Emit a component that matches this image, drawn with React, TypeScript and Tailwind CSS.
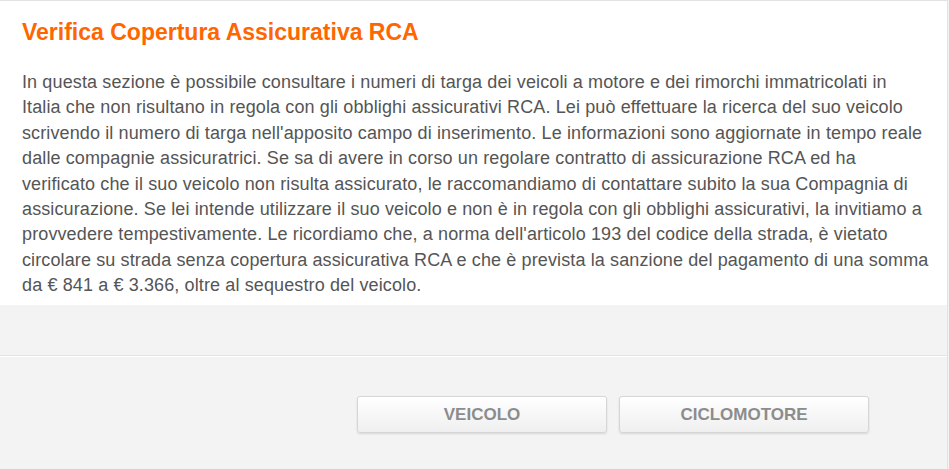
import React from 'react';

const righe = [
  "In questa sezione è possibile consultare i numeri di targa dei veicoli a motore e dei rimorchi immatricolati in",
  "Italia che non risultano in regola con gli obblighi assicurativi RCA. Lei può effettuare la ricerca del suo veicolo",
  "scrivendo il numero di targa nell'apposito campo di inserimento. Le informazioni sono aggiornate in tempo reale",
  "dalle compagnie assicuratrici. Se sa di avere in corso un regolare contratto di assicurazione RCA ed ha",
  "verificato che il suo veicolo non risulta assicurato, le raccomandiamo di contattare subito la sua Compagnia di",
  "assicurazione. Se lei intende utilizzare il suo veicolo e non è in regola con gli obblighi assicurativi, la invitiamo a",
  "provvedere tempestivamente. Le ricordiamo che, a norma dell'articolo 193 del codice della strada, è vietato",
  "circolare su strada senza copertura assicurativa RCA e che è prevista la sanzione del pagamento di una somma",
  "da € 841 a € 3.366, oltre al sequestro del veicolo.",
];

function TabButton({ label }: { label: string }) {
  return (
    <button className="w-[250px] h-[37px] rounded-[3px] border border-[#d6d6d6] bg-gradient-to-b from-white to-[#efefef] shadow-[0_1px_2px_rgba(0,0,0,0.12)] text-[17px] font-bold text-[#8c8c8c]">
      {label}
    </button>
  );
}

export default function App() {
  return (
    <div className="w-[949px] h-[469px] bg-[#f3f3f3] font-['Liberation_Sans',Arial,sans-serif] overflow-hidden">
      <div className="w-[948px] h-full border-r border-[#e2e2e2]">
        {/* Intro */}
        <div className="bg-white border-t border-[#e2e2e2] pl-[22px] pr-[10px] pt-[16px] h-[305px]">
          <h1 className="text-[23px] leading-[30px] font-bold text-[#ff6600]">
            Verifica Copertura Assicurativa RCA
          </h1>
          <p className="mt-[23px] text-[18px] leading-[25.4px] tracking-[0.12px] text-[#555555] whitespace-nowrap">
            {righe.map((r, i) => (
              <span key={i} className="block">
                {r}
              </span>
            ))}
          </p>
        </div>

        {/* Separatore */}
        <div className="h-[50px]" />
        <div className="h-px bg-[#e4e4e4]" />
        <div className="h-px bg-white" />

        {/* Tipo veicolo */}
        <div className="flex gap-[12px] pl-[357px] pt-[39px]">
          <TabButton label="VEICOLO" />
          <TabButton label="CICLOMOTORE" />
        </div>
      </div>
    </div>
  );
}
